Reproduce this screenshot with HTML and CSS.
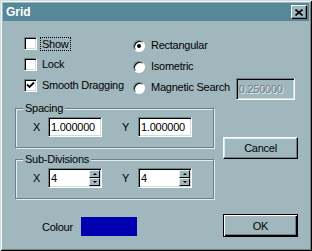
FILE: index.html
```html
<!DOCTYPE html>
<html lang="en">
<head>
  <meta charset="UTF-8" />
  <title>Grid</title>
  <link rel="stylesheet" href="styles.css">
</head>
<body>
  <div class="dialog">
    <!-- title bar -->
    <div class="titlebar">
      <span class="title">Grid</span>
      <button class="close-btn">
        <svg width="8" height="7" viewBox="0 0 8 7"><path d="M0.5 0.5 L7.5 6.5 M7.5 0.5 L0.5 6.5" stroke="#000" stroke-width="1.6" fill="none"/></svg>
      </button>
    </div>

    <!-- options -->
    <div class="top">
      <div class="checks">
        <div class="row"><span class="check"></span><span class="focus">Show</span></div>
        <div class="row"><span class="check"></span><span>Lock</span></div>
        <div class="row">
          <span class="check">
            <svg width="9" height="9" viewBox="0 0 9 9"><path d="M1 3.5 L3.5 6 L8 1.5" stroke="#000" stroke-width="1.8" fill="none"/></svg>
          </span>
          <span>Smooth Dragging</span>
        </div>
      </div>
      <div class="radios">
        <div class="row"><span class="radio on"></span><span>Rectangular</span></div>
        <div class="row"><span class="radio"></span><span>Isometric</span></div>
        <div class="row"><span class="radio"></span><span>Magnetic Search</span><span class="field disabled">0.250000</span></div>
      </div>
    </div>

    <div class="lower">
      <div class="left">
        <fieldset class="group">
          <legend>Spacing</legend>
          <div class="pair">
            <span class="axis">X</span><span class="field">1.000000</span>
            <span class="axis y">Y</span><span class="field">1.000000</span>
          </div>
        </fieldset>
        <fieldset class="group sub">
          <legend>Sub-Divisions</legend>
          <div class="pair">
            <span class="axis">X</span>
            <span class="field spin"><span class="val">4</span><span class="spinner"><span class="sp up"></span><span class="sp down"></span></span></span>
            <span class="axis y">Y</span>
            <span class="field spin"><span class="val">4</span><span class="spinner"><span class="sp up"></span><span class="sp down"></span></span></span>
          </div>
        </fieldset>
        <div class="colour-row">
          <span class="colour-label">Colour</span>
          <span class="swatch"></span>
        </div>
      </div>
      <div class="actions">
        <button class="btn cancel">Cancel</button>
        <button class="btn ok">OK</button>
      </div>
    </div>
  </div>
</body>
</html>
```

FILE: styles.css
```css
* {
  box-sizing: border-box;
}

body {
  margin: 0;
  background: #a0b8bd;
  font-family: "Liberation Sans", Arial, sans-serif;
  font-size: 11px;
  letter-spacing: -0.25px;
  color: #000;
}

.dialog {
  width: 312px;
  height: 251px;
  padding: 3px;
  background: #a0b8bd;
  box-shadow: inset 1px 1px #cfdcde, inset -1px -1px #000,
              inset 2px 2px #f2f6f6, inset -2px -2px #6e8285;
}

/* title bar */
.titlebar {
  height: 18px;
  background: #56879a;
  display: flex;
  align-items: center;
  justify-content: space-between;
  padding: 0 2px 0 3px;
}

.title {
  color: #fff;
  font-weight: bold;
  font-size: 12px;
  letter-spacing: 0;
}

.close-btn {
  width: 16px;
  height: 14px;
  padding: 0;
  background: #a0b8bd;
  border: 1px solid;
  border-color: #fff #000 #000 #fff;
  box-shadow: inset -1px -1px #6e8285;
  display: flex;
  align-items: center;
  justify-content: center;
}

/* check + radio options */
.top {
  display: flex;
  margin-top: 16px;
  padding-left: 21px;
}

.checks {
  width: 109px;
  display: flex;
  flex-direction: column;
  gap: 8px;
}

.radios {
  display: flex;
  flex-direction: column;
  gap: 8px;
  padding-top: 2px;
}

.row {
  display: flex;
  align-items: center;
  gap: 5px;
  height: 13px;
  line-height: 13px;
  white-space: nowrap;
}

.radios .row {
  gap: 6px;
}

.check {
  width: 13px;
  height: 13px;
  flex: none;
  background: #fff;
  border: 1px solid;
  border-color: #6e8285 #fff #fff #6e8285;
  box-shadow: inset 1px 1px #000, inset -1px -1px #cfdcde;
  display: flex;
  align-items: center;
  justify-content: center;
}

.focus {
  margin-left: -2px;
  padding: 0 1px;
  border: 1px dotted #000;
  line-height: 12px;
}

.radio {
  width: 12px;
  height: 12px;
  flex: none;
  border-radius: 50%;
  background: #fff;
  border: 1px solid;
  border-color: #6e8285 #fff #fff #6e8285;
  box-shadow: inset 1px 1px #000;
  display: flex;
  align-items: center;
  justify-content: center;
}

.radio.on::after {
  content: "";
  width: 4px;
  height: 4px;
  border-radius: 50%;
  background: #000;
}

/* edit fields */
.field {
  width: 54px;
  height: 20px;
  flex: none;
  background: #fff;
  border: 1px solid;
  border-color: #6e8285 #fff #fff #6e8285;
  box-shadow: inset 1px 1px #000, inset -1px -1px #cfdcde;
  padding-left: 2px;
  line-height: 18px;
}

.field.disabled {
  width: 59px;
  height: 22px;
  line-height: 20px;
  margin-top: 3px;
  background: #a0b8bd;
  color: #6e8285;
  text-shadow: 1px 1px #e4ecee;
}

.field.spin {
  display: flex;
  padding: 1px 1px 1px 2px;
  line-height: 16px;
}

.val {
  flex: 1;
}

.spinner {
  width: 11px;
  display: flex;
  flex-direction: column;
}

.sp {
  flex: 1;
  background: #a0b8bd;
  border: 1px solid;
  border-color: #e4ecee #000 #000 #e4ecee;
  display: flex;
  align-items: center;
  justify-content: center;
}

.sp::after {
  content: "";
  border-left: 2px solid transparent;
  border-right: 2px solid transparent;
}

.sp.up::after {
  border-bottom: 2px solid #000;
}

.sp.down::after {
  border-top: 2px solid #000;
}

/* lower part */
.lower {
  display: grid;
  grid-template-columns: 199px 75px;
  column-gap: 9px;
  margin-top: 8px;
  padding-left: 12px;
}

.group {
  margin: 0;
  min-width: 0;
  padding: 2px 0 10px 7px;
  border: 1px solid #6b8084;
  box-shadow: 1px 1px #e4ecee, inset 1px 1px #e4ecee;
}

.group.sub {
  margin-top: 5px;
}

.group legend {
  padding: 0 2px;
  line-height: 13px;
  background: #a0b8bd;
}

.pair {
  display: flex;
  align-items: center;
  padding-left: 10px;
}

.axis {
  width: 15px;
}

.axis.y {
  width: 16px;
  margin-left: 20px;
}

.colour-row {
  display: flex;
  align-items: center;
  margin-top: 18px;
  padding-left: 27px;
}

.colour-label {
  width: 39px;
}

.swatch {
  width: 56px;
  height: 19px;
  background: #0000b0;
}

.actions {
  display: flex;
  flex-direction: column;
}

.btn {
  font-family: inherit;
  font-size: 11px;
  letter-spacing: inherit;
  color: #000;
  padding: 0;
  background: #a0b8bd;
  border: 1px solid;
  border-color: #fff #000 #000 #fff;
  box-shadow: inset -1px -1px #6e8285, inset 1px 1px #dfe8ea;
}

.cancel {
  height: 22px;
  margin-top: 35px;
}

.ok {
  height: 23px;
  margin-top: 55px;
  border-color: #000;
  box-shadow: inset 1px 1px #fff, inset -1px -1px #000, inset -2px -2px #6e8285;
}
```
